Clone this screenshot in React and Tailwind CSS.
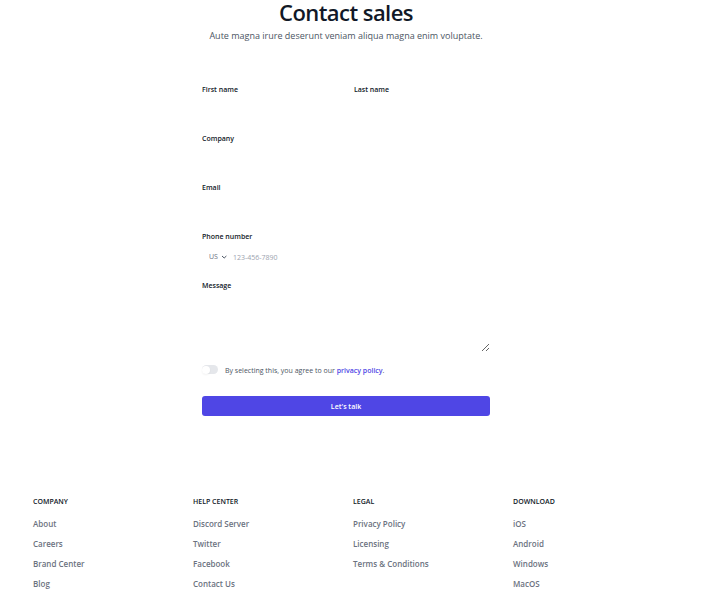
const footerColumns = [
  { title: "Company", links: ["About", "Careers", "Brand Center", "Blog"] },
  { title: "Help center", links: ["Discord Server", "Twitter", "Facebook", "Contact Us"] },
  { title: "Legal", links: ["Privacy Policy", "Licensing", "Terms & Conditions"] },
  { title: "Download", links: ["iOS", "Android", "Windows", "MacOS"] },
];

const labelClass = "block text-[7px] leading-3 font-semibold text-[#111827]";
const inputClass =
  "mt-[5px] block h-5 w-full rounded-sm bg-transparent px-2 text-[7px] text-[#111827] outline-none placeholder:text-[#9ca3af]";

function Field({ id, label, type = "text", className = "" }) {
  return (
    <div className={className}>
      <label htmlFor={id} className={labelClass}>{label}</label>
      <input id={id} name={id} type={type} className={inputClass} />
    </div>
  );
}

function PhoneField() {
  return (
    <div className="col-span-2">
      <label htmlFor="phone" className={labelClass}>Phone number</label>
      <div className="mt-1 flex h-5 items-center pl-[7px]">
        <div className="grid items-center">
          <select
            aria-label="Country"
            className="col-start-1 row-start-1 w-5 appearance-none bg-transparent text-[7px] leading-3 text-[#6b7280] outline-none"
          >
            <option>US</option>
            <option>CA</option>
            <option>EU</option>
          </select>
          <svg
            viewBox="0 0 8 8"
            className="pointer-events-none col-start-1 row-start-1 size-2 translate-x-[11px] text-[#4b5563]"
            fill="none"
            stroke="currentColor"
            strokeWidth="1"
            aria-hidden="true"
          >
            <path d="M2 3l2.2 2L6.4 3" />
          </svg>
        </div>
        <input
          id="phone"
          name="phone"
          type="tel"
          placeholder="123-456-7890"
          className="ml-1 h-4 min-w-0 flex-1 bg-transparent text-[7px] leading-3 text-[#111827] outline-none placeholder:text-[#9ca3af]"
        />
      </div>
    </div>
  );
}

export default function App() {
  return (
    <div className="bg-white pr-[22px] font-['Open_Sans','Noto_Sans',sans-serif]">
      <header className="text-center">
        <h1 className="text-[22px] leading-6 font-semibold tracking-tight text-[#111827]">Contact sales</h1>
        <p className="mt-1 text-[9px] leading-4 text-[#4b5563]">
          Aute magna irure deserunt veniam aliqua magna enim voluptate.
        </p>
      </header>

      <form className="mx-auto mt-10 max-w-72" onSubmit={(e) => e.preventDefault()}>
        <div className="grid grid-cols-2 gap-x-4 gap-y-3">
          <Field id="first-name" label="First name" />
          <Field id="last-name" label="Last name" />
          <Field id="company" label="Company" className="col-span-2" />
          <Field id="email" label="Email" type="email" className="col-span-2" />
          <PhoneField />
          <div className="col-span-2 pt-px">
            <label htmlFor="message" className={labelClass}>Message</label>
            <textarea
              id="message"
              name="message"
              className="mt-1 block h-14 w-full resize-y rounded-sm bg-transparent px-2 py-1 text-[7px] leading-3 text-[#111827] outline-none"
            />
          </div>
          <div className="col-span-2 flex items-start gap-[7px]">
            <input
              id="agree"
              type="checkbox"
              role="switch"
              className="mt-px flex h-[9px] w-4 appearance-none items-center rounded-full bg-[#e5e7eb] before:size-2 before:rounded-full before:bg-white before:shadow-xs checked:bg-[#4f46e5] checked:before:translate-x-2"
            />
            <label htmlFor="agree" className="pt-px text-[7px] leading-3 text-[#4b5563]">
              By selecting this, you agree to our{" "}
              <a href="#privacy" className="font-semibold text-[#4f46e5]">privacy policy</a>.
            </label>
          </div>
        </div>
        <button
          type="submit"
          className="mt-[19px] block h-5 w-full rounded-[3px] bg-[#4f46e5] pt-0.5 text-center text-[7px] leading-3 font-semibold text-white"
        >
          Let's talk
        </button>
      </form>

      <footer className="mx-auto mt-20 grid max-w-[640px] grid-cols-4">
        {footerColumns.map((column) => (
          <nav key={column.title} aria-label={column.title} className="pl-[7px]">
            <h2 className="text-[7px] leading-3 font-semibold text-[#111827] uppercase">{column.title}</h2>
            <ul className="mt-[10px] space-y-2 text-[8px] leading-3 font-semibold text-[#6b7280]">
              {column.links.map((link) => (
                <li key={link}>
                  <a href="#footer" className="block">{link}</a>
                </li>
              ))}
            </ul>
          </nav>
        ))}
      </footer>
    </div>
  );
}
